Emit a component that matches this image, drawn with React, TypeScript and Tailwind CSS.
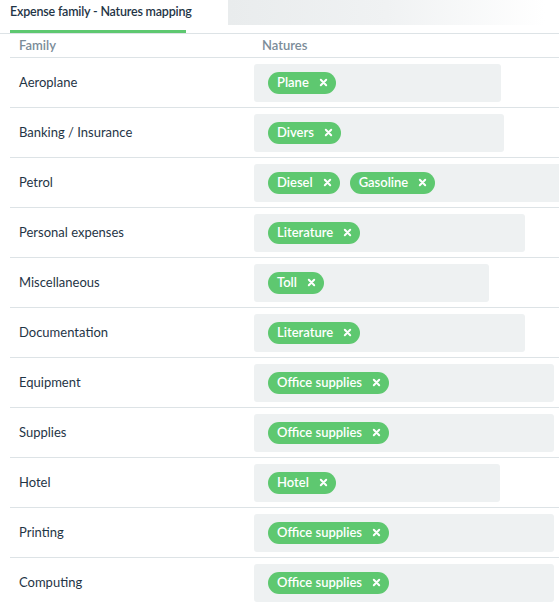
import React from 'react';

type Row = { family: string; natures: string[]; width: number };

const rows: Row[] = [
  { family: 'Aeroplane', natures: ['Plane'], width: 247 },
  { family: 'Banking / Insurance', natures: ['Divers'], width: 250 },
  { family: 'Petrol', natures: ['Diesel', 'Gasoline'], width: 320 },
  { family: 'Personal expenses', natures: ['Literature'], width: 271 },
  { family: 'Miscellaneous', natures: ['Toll'], width: 235 },
  { family: 'Documentation', natures: ['Literature'], width: 271 },
  { family: 'Equipment', natures: ['Office supplies'], width: 300 },
  { family: 'Supplies', natures: ['Office supplies'], width: 300 },
  { family: 'Hotel', natures: ['Hotel'], width: 246 },
  { family: 'Printing', natures: ['Office supplies'], width: 300 },
  { family: 'Computing', natures: ['Office supplies'], width: 300 },
];

function Pill({ label }: { label: string }) {
  return (
    <span className="inline-flex items-center h-[22px] rounded-full bg-[#5ec870] pl-[9px] pr-[8px] text-[13px] font-semibold text-white whitespace-nowrap">
      {label}
      <svg width="9" height="9" viewBox="0 0 10 10" className="ml-[10px]">
        <path d="M2 2 L8 8 M8 2 L2 8" stroke="white" strokeWidth="2.2" strokeLinecap="round" />
      </svg>
    </span>
  );
}

export default function App() {
  return (
    <div className="w-[559px] h-[606px] overflow-hidden bg-white text-[#1f3546]" style={{ fontFamily: '"Source Sans Pro", Lato, "Liberation Sans", sans-serif' }}>
      {/* tab bar */}
      <div className="flex h-[34px] border-b border-[#dde3e6]">
        <div className="ml-[10px] flex w-[176px] flex-col">
          <div className="h-[31px] leading-[24px] text-[12.5px] font-semibold whitespace-nowrap tracking-[-0.2px]">Expense family - Natures mapping</div>
          <div className="h-[3px] bg-[#5ec870]" />
        </div>
        <div className="ml-[42px] h-[25px] w-[317px] bg-gradient-to-r from-[#e9eced] via-[#f0f2f3] to-white" />
      </div>

      {/* table */}
      <div className="ml-[10px]">
        <div className="flex h-[24px] items-center border-b border-[#dde3e6] text-[13px] font-semibold text-[#7b8c99]">
          <div className="w-[244px] shrink-0 pl-[9px]">Family</div>
          <div className="pl-[8px]">Natures</div>
        </div>
        {rows.map(r => (
          <div key={r.family} className="flex h-[50px] items-center border-b border-[#dde3e6]">
            <div className="w-[244px] shrink-0 pl-[9px] text-[13px] whitespace-nowrap">{r.family}</div>
            <div
              className="flex h-[38px] shrink-0 items-center gap-[10px] rounded-[3px] bg-[#eef1f2] pl-[14px]"
              style={{ width: r.width }}
            >
              {r.natures.map(n => <Pill key={n} label={n} />)}
            </div>
          </div>
        ))}
      </div>
    </div>
  );
}
